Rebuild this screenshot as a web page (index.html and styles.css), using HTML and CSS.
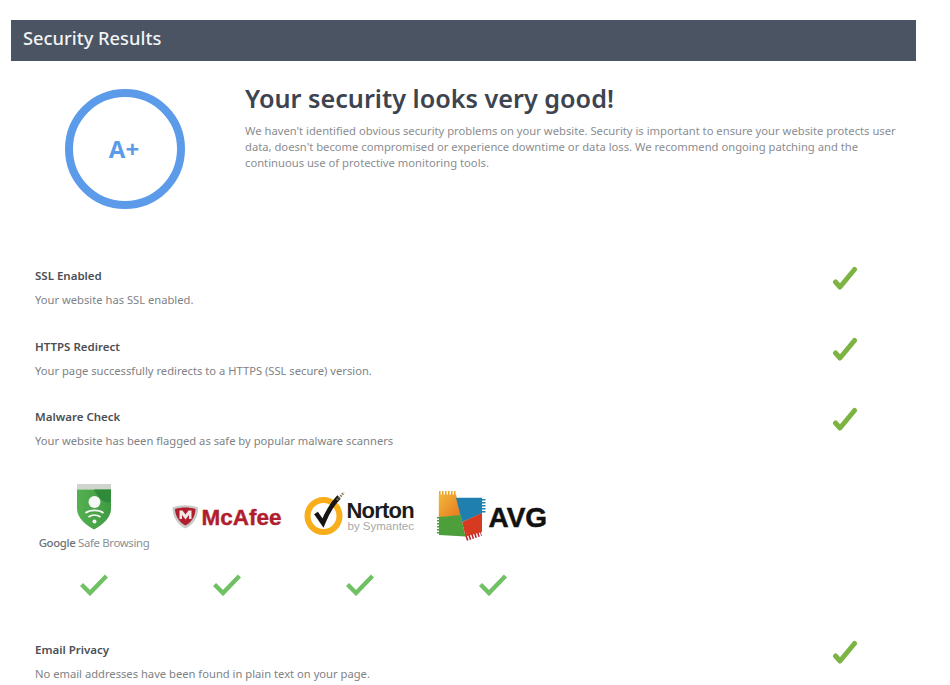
FILE: index.html
```html
<!DOCTYPE html>
<html lang="en">
<head>
<meta charset="utf-8">
<title>Security Results</title>
<link rel="stylesheet" href="styles.css">
</head>
<body>
<svg class="defs" width="0" height="0" aria-hidden="true">
  <defs>
    <linearGradient id="avg-orange" x1="0" y1="0" x2="1" y2="1">
      <stop offset="0" stop-color="#f0b93a"/>
      <stop offset="1" stop-color="#e8761e"/>
    </linearGradient>
    <linearGradient id="gsb-green" x1="0" y1="0" x2="1" y2="0">
      <stop offset="0" stop-color="#55b051"/>
      <stop offset="1" stop-color="#3f9a42"/>
    </linearGradient>
  </defs>
  <symbol id="check" viewBox="0 0 26 26">
    <path d="M3.500 16 L8 21 L22.500 3.500" fill="none" stroke="currentColor" stroke-width="5" stroke-linecap="round" stroke-linejoin="round"/>
  </symbol>
  <symbol id="tick" viewBox="0 0 28 22">
    <path d="M1.500 10.500 L10 19 L26.500 2" fill="none" stroke="currentColor" stroke-width="4.400"/>
  </symbol>
</svg>
<main class="page">
  <header class="bar"><h1 class="bar-title">Security Results</h1></header>

  <section class="summary">
    <div class="grade-col"><div class="grade">A+</div></div>
    <div class="summary-text">
      <h2 class="headline">Your security looks very good!</h2>
      <p class="lead">We haven't identified obvious security problems on your website. Security is important to ensure your website protects user data, doesn't become compromised or experience downtime or data loss. We recommend ongoing patching and the continuous use of protective monitoring tools.</p>
    </div>
  </section>

  <section class="checks">
    <div class="check-row">
      <div><h3 class="check-title">SSL Enabled</h3><p class="check-desc">Your website has SSL enabled.</p></div>
      <svg class="check-icon"><use href="#check"/></svg>
    </div>
    <div class="check-row">
      <div><h3 class="check-title">HTTPS Redirect</h3><p class="check-desc">Your page successfully redirects to a HTTPS (SSL secure) version.</p></div>
      <svg class="check-icon"><use href="#check"/></svg>
    </div>
    <div class="check-row">
      <div><h3 class="check-title">Malware Check</h3><p class="check-desc">Your website has been flagged as safe by popular malware scanners</p></div>
      <svg class="check-icon"><use href="#check"/></svg>
    </div>
  </section>

  <section class="scanners">
    <div class="scanner">
      <div class="logo">
        <svg class="logo-svg" width="112" height="70" viewBox="0 0 112 70">
          <path d="M39 2H73V7.500H39Z" fill="#cfd4cf"/>
          <path d="M39 7.500H73V27C73 36 64 43 56 47.500C48 43 39 36 39 27Z" fill="url(#gsb-green)"/>
          <path d="M56 7.500H73V20C68 22 61 18 56 7.500Z" fill="#2f8a3a"/>
          <circle cx="56.500" cy="20" r="6" fill="#f6f9f6"/>
          <path d="M47.500 31C52 27.500 61 27.500 65.500 31M50.500 35C54 32.500 59 32.500 62.500 35" fill="none" stroke="#f6f9f6" stroke-width="1.800"/>
          <circle cx="56.500" cy="39.500" r="2" fill="#f6f9f6"/>
          <text class="gsb" x="56" y="64.500" text-anchor="middle"><tspan class="gsb-g">Google</tspan> Safe Browsing</text>
        </svg>
      </div>
      <svg class="scan-tick"><use href="#tick"/></svg>
    </div>
    <div class="scanner">
      <div class="logo">
        <svg class="logo-svg" width="112" height="70" viewBox="0 0 112 70">
          <path d="M1.500 25.500C9 22.500 19 22.500 27 25.500C27.500 35 22 43 14.500 46.500C7 43 1 35 1.500 25.500Z" fill="#c8cac8"/>
          <path d="M4 27C10 25 18.500 25 24.500 27C24.500 34 20.500 40.500 14.500 43.500C8.500 40.500 4 34 4 27Z" fill="#b01e2e"/>
          <path d="M8.500 28.500H11.500L14.500 32.500L17.500 28.500H20.500V37H18V33L14.500 37.500L11 33V37H8.500Z" fill="#f3e6e6"/>
          <text class="mcafee" x="30.500" y="43">McAfee</text>
        </svg>
      </div>
      <svg class="scan-tick"><use href="#tick"/></svg>
    </div>
    <div class="scanner">
      <div class="logo">
        <svg class="logo-svg" width="112" height="70" viewBox="0 0 112 70">
          <circle cx="19.500" cy="34" r="16" fill="none" stroke="#f7ae1a" stroke-width="6"/>
          <path d="M12 31L19 41C23 31 28 22 35 15" fill="none" stroke="#151515" stroke-width="4.600"/>
          <path d="M33 18L40 10.500" stroke="#8a7a55" stroke-width="2.400" stroke-dasharray="1.500 1"/>
          <text class="norton" x="42.500" y="36">Norton</text>
          <text class="symantec" x="43.500" y="48">by Symantec</text>
        </svg>
      </div>
      <svg class="scan-tick"><use href="#tick"/></svg>
    </div>
    <div class="scanner">
      <div class="logo">
        <svg class="logo-svg" width="112" height="70" viewBox="0 0 112 70">
          <path d="M2 12H19" fill="none" stroke="#eda52c" stroke-width="6" stroke-dasharray="1.600 1.400"/>
          <path d="M1.800 12.500H19L24 33.500L1.800 35.500Z" fill="url(#avg-orange)"/>
          <path d="M46 17V32" stroke="#1f7fae" stroke-width="5" stroke-dasharray="1.600 1.400"/>
          <path d="M19 15.700H45V31.300L25.200 40L23.500 33.500Z" fill="#1f7fae"/>
          <path d="M1 35V53" stroke="#4d9f3c" stroke-width="5" stroke-dasharray="1.600 1.400"/>
          <path d="M2 35L24 33L25.200 40L28.500 54.500L2 53Z" fill="#4d9f3c"/>
          <path d="M29 56L44 51" stroke="#b8262e" stroke-width="6" stroke-dasharray="1.600 1.400"/>
          <path d="M25.200 40L45 31V50L28.500 54.500Z" fill="#d63a20"/>
          <text class="avg" x="51.500" y="45">AVG</text>
        </svg>
      </div>
      <svg class="scan-tick"><use href="#tick"/></svg>
    </div>
  </section>

  <section class="checks checks-last">
    <div class="check-row">
      <div><h3 class="check-title">Email Privacy</h3><p class="check-desc">No email addresses have been found in plain text on your page.</p></div>
      <svg class="check-icon"><use href="#check"/></svg>
    </div>
  </section>
</main>
</body>
</html>
```
FILE: styles.css
```css
* { box-sizing: border-box; }
html, body { margin: 0; padding: 0; background: #fff; }
body { font-family: "Noto Sans", "Open Sans", sans-serif; height: 685px; overflow: hidden; }
.defs { position: absolute; }
.page { width: 950px; padding: 20px 34px 0 11px; }
h1, h2, h3, p { margin: 0; font-weight: normal; }

.bar { height: 41px; background: #4a5463; padding: 0 0 6px 12px; display: flex; align-items: center; }
.bar-title { color: #f2f3f5; font-size: 18.300px; line-height: 24px; font-weight: 500; }

.summary { display: flex; margin-top: 28px; height: 120px; }
.grade-col { width: 234px; padding-left: 54px; flex: none; }
.grade { width: 120px; height: 120px; border: 8px solid #5b9bea; border-radius: 50%; display: flex; align-items: center; justify-content: center; color: #5b9bea; font-family: "Open Sans", sans-serif; font-weight: 700; font-size: 24px; padding: 0 2px 2px 0; }
.summary-text { flex: 1; }
.headline { color: #3d4450; font-size: 25.200px; line-height: 36px; font-weight: 600; margin-top: -9px; }
.lead { color: #8b8d90; font-size: 11.230px; line-height: 16px; margin-top: 7px; }

.checks { margin-top: 59px; padding-left: 24px; }
.check-row { display: flex; justify-content: space-between; height: 70.500px; padding-right: 58px; }
.check-title { color: #4b4f55; font-size: 11.500px; line-height: 16px; font-weight: 600; }
.check-desc { color: #808285; font-size: 11.200px; line-height: 16px; margin-top: 8px; }
.check-icon { width: 26px; height: 26px; color: #7cb342; margin-top: -2px; }

.scanners { display: flex; margin-top: 2px; padding-left: 16px; }
.scanner { width: 133px; display: flex; flex-direction: column; align-items: center; }
.logo { height: 70px; }
.logo-svg { display: block; }
.scan-tick { width: 28px; height: 22px; color: #6fc163; margin-top: 22px; }

.checks-last { margin-top: 46px; }

.gsb { font-family: "Noto Sans", sans-serif; font-size: 11.400px; fill: #8b8f93; letter-spacing: -0.350px; }
.gsb-g { fill: #6e7276; font-weight: 500; }
.mcafee { font-family: "Liberation Sans", sans-serif; font-weight: 700; font-size: 22.500px; fill: #b01e2e; stroke: #b01e2e; stroke-width: 0.400px; }
.norton { font-family: "Liberation Sans", sans-serif; font-weight: 700; font-size: 22px; fill: #1c1c1c; letter-spacing: -0.800px; }
.symantec { font-family: "Liberation Sans", sans-serif; font-size: 11.500px; fill: #a6a8aa; }
.avg { font-family: "Liberation Sans", sans-serif; font-weight: 700; font-size: 28px; fill: #111; stroke: #111; stroke-width: 0.500px; }
```
